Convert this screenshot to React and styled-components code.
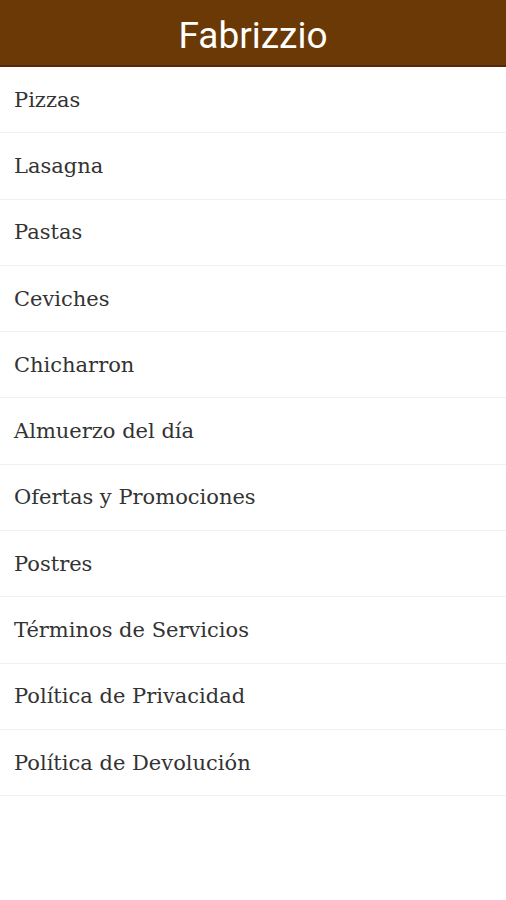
import React from "react";
import styled, { createGlobalStyle } from "styled-components";

const Global = createGlobalStyle`
  html, body { margin: 0; padding: 0; background: #ffffff; }
  * { box-sizing: border-box; }
`;

const Page = styled.div`
  width: 506px;
  min-height: 900px;
  background: #ffffff;
`;

const Header = styled.header`
  height: 67px;
  background: #6b3905;
  border-bottom: 2px solid #56270a;
  display: flex;
  align-items: center;
  justify-content: center;
`;

const Title = styled.h1`
  margin: 0;
  font-family: Roboto, "Noto Sans", sans-serif;
  font-weight: 400;
  font-size: 37px;
  color: #ffffff;
  line-height: 1;
  padding-top: 6px;
`;

const Menu = styled.ul`
  list-style: none;
  margin: 0;
  padding: 0;
`;

const Item = styled.li`
  height: 66.3px;
  display: flex;
  align-items: center;
  padding-left: 14px;
  border-bottom: 1px solid #f1f1f1;
  font-family: "DejaVu Serif", "Liberation Serif", serif;
  font-size: 21px;
  color: #333333;
`;

const items = [
  "Pizzas",
  "Lasagna",
  "Pastas",
  "Ceviches",
  "Chicharron",
  "Almuerzo del día",
  "Ofertas y Promociones",
  "Postres",
  "Términos de Servicios",
  "Política de Privacidad",
  "Política de Devolución",
];

export default function App() {
  return (
    <Page>
      <Global />
      <Header>
        <Title>Fabrizzio</Title>
      </Header>
      <Menu>
        {items.map((t) => (
          <Item key={t}>{t}</Item>
        ))}
      </Menu>
    </Page>
  );
}
